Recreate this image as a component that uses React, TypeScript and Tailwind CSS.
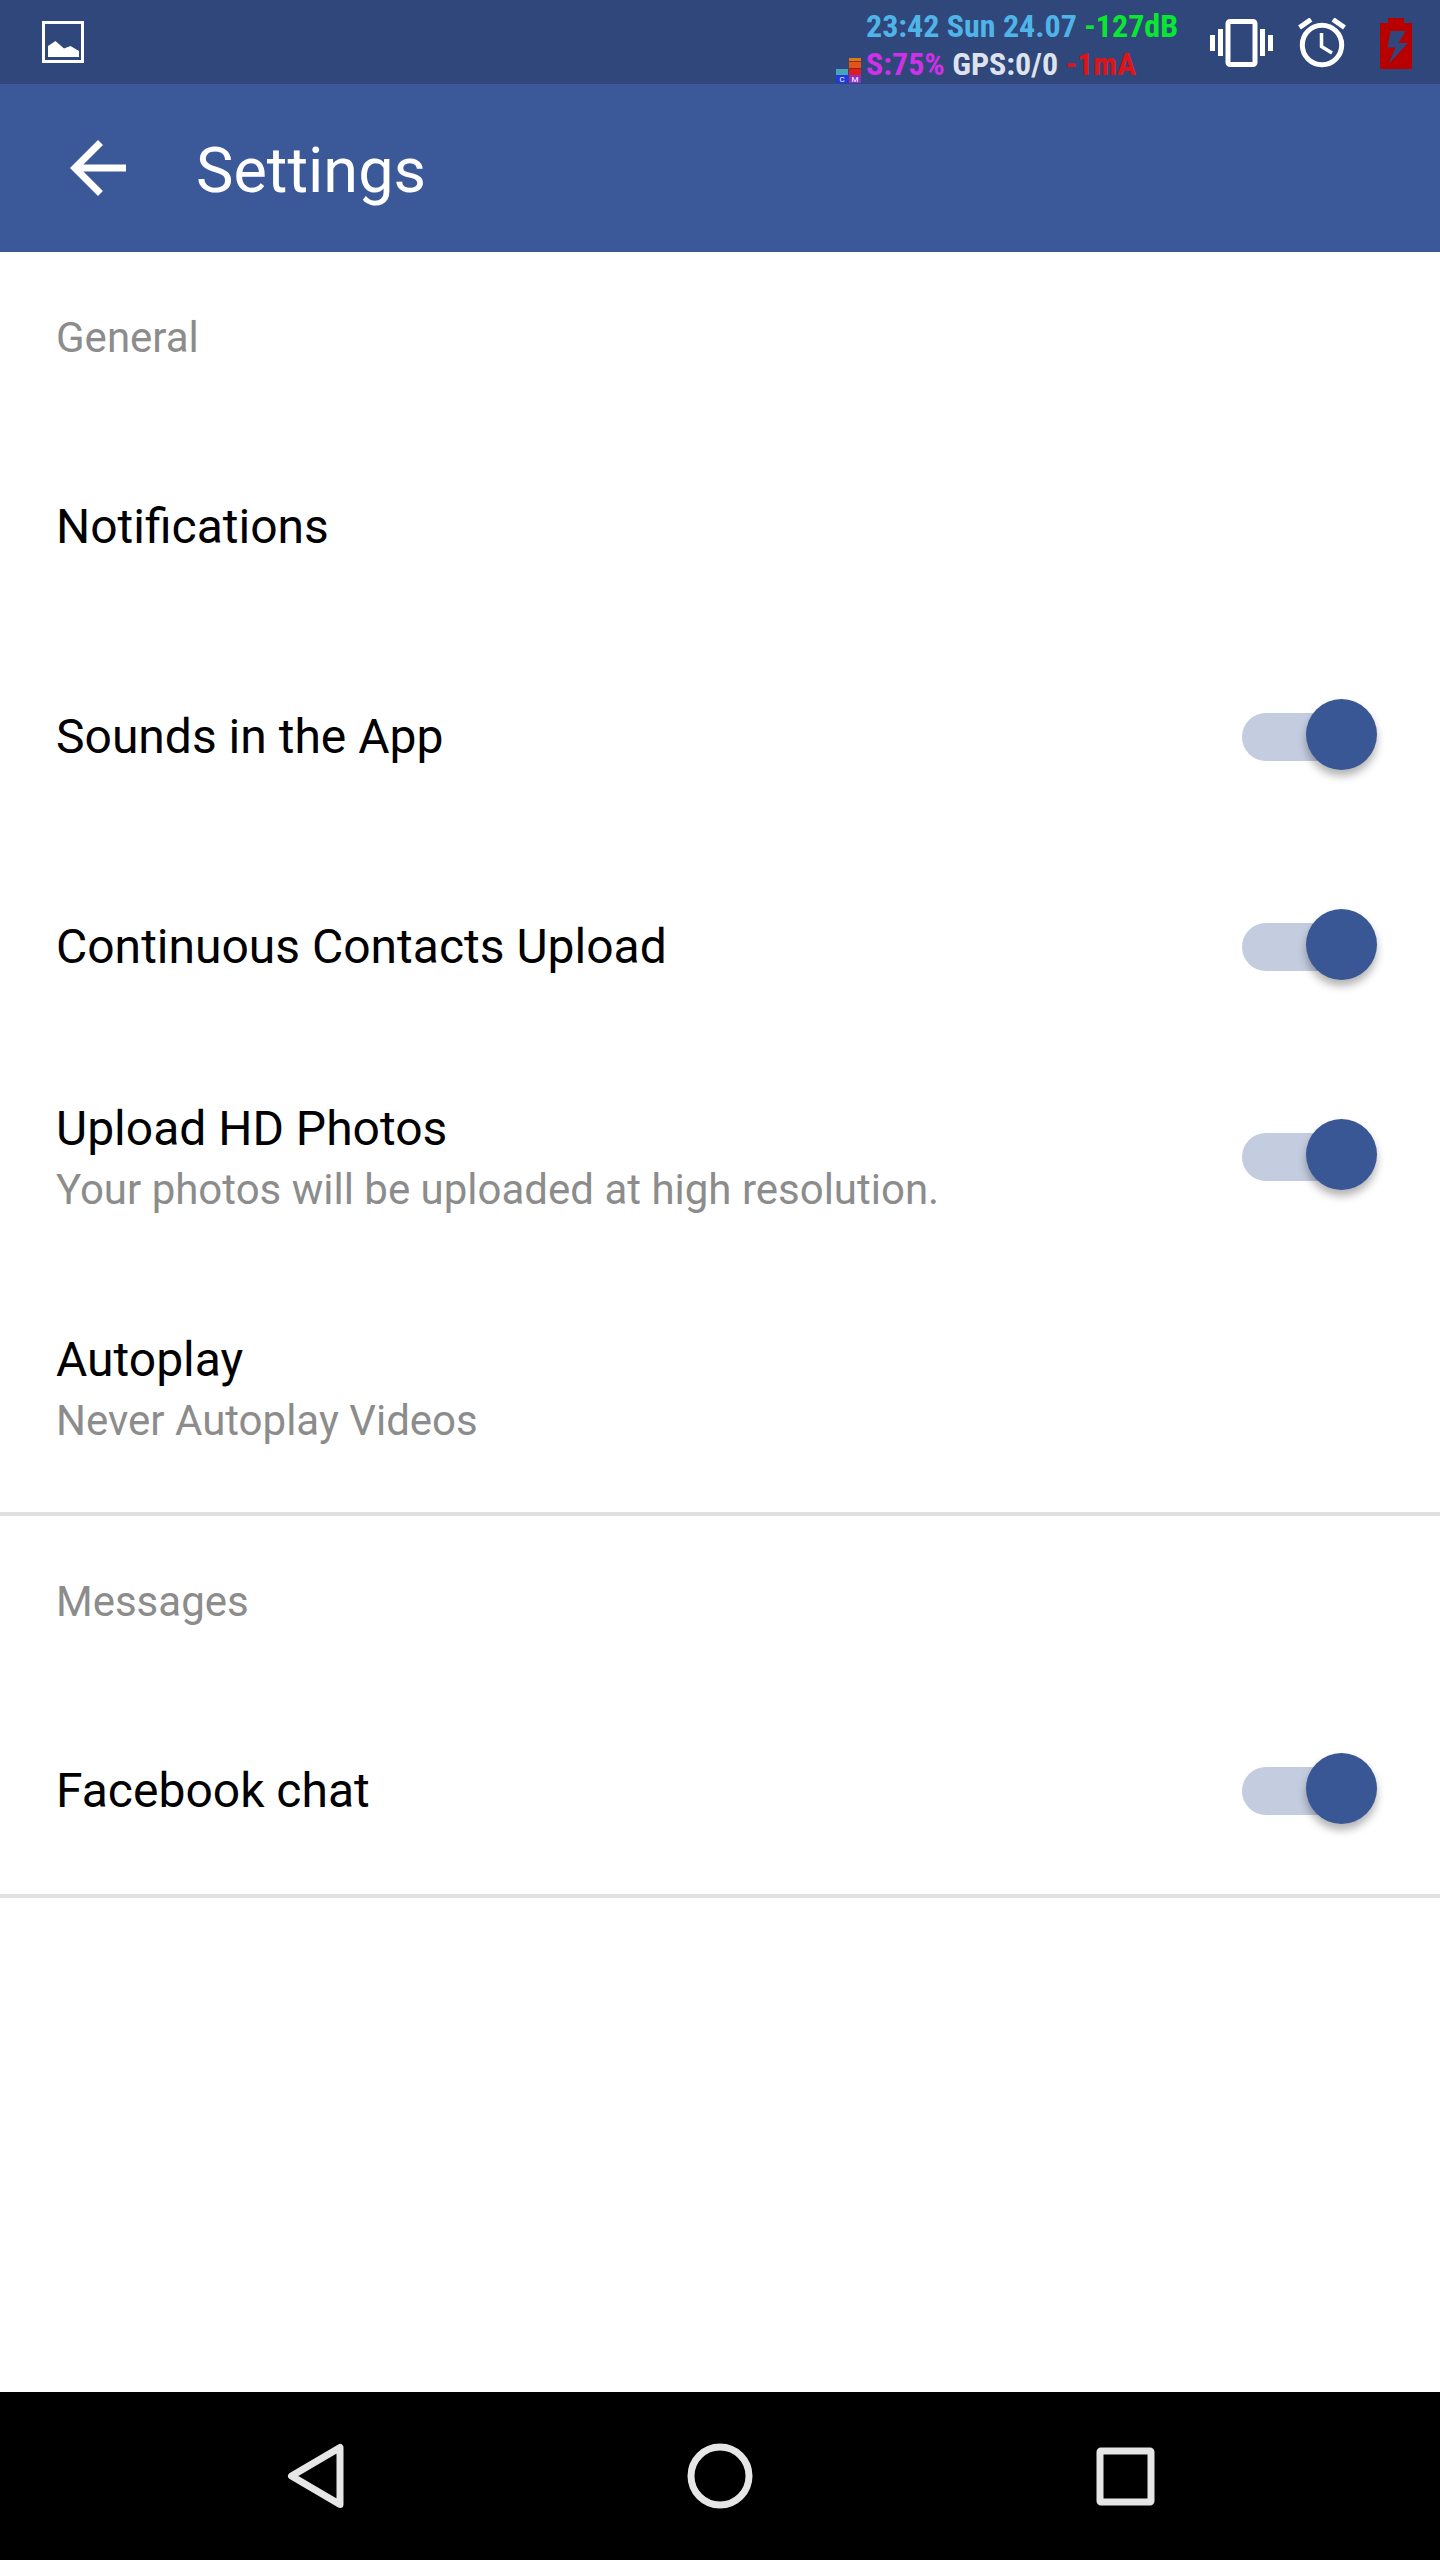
import React, { useState } from 'react';

interface ToggleProps {
  id: string;
  checked: boolean;
  onChange: (checked: boolean) => void;
}

const Toggle: React.FC<ToggleProps> = ({ id, checked, onChange }) => (
  <input
    id={id}
    type="checkbox"
    role="switch"
    checked={checked}
    onChange={(e) => onChange(e.target.checked)}
    className="
      relative mr-[14px] h-12 w-32 shrink-0 cursor-pointer appearance-none rounded-full bg-gray-300
      before:absolute before:-top-[14px] before:-left-2 before:h-[71px] before:w-[71px] before:rounded-full
      before:bg-gray-50 before:shadow-[0_6px_8px_rgba(0,0,0,0.3)] before:content-['']
      checked:bg-[#c4cce0] checked:before:left-16 checked:before:bg-[#3a5795]
    "
  />
);

interface SettingRowProps {
  id: string;
  title: string;
  subtitle?: string;
  tall?: boolean;
  toggle?: boolean;
}

const SettingRow: React.FC<SettingRowProps> = ({ id, title, subtitle, tall, toggle }) => {
  const [enabled, setEnabled] = useState(true);

  const text = (
    <span className="block min-w-0 flex-1">
      <span className="block text-[48px] leading-[66px] text-black">{title}</span>
      {subtitle && <span className="block text-[42px] leading-[56px] text-[#8c8c8c]">{subtitle}</span>}
    </span>
  );

  const rowClass = `flex w-full items-center px-14 pt-1 text-left ${tall ? 'min-h-[252px]' : 'min-h-[210px]'}`;

  if (toggle) {
    return (
      <label htmlFor={id} className={rowClass}>
        {text}
        <Toggle id={id} checked={enabled} onChange={setEnabled} />
      </label>
    );
  }

  return (
    <button type="button" id={id} className={rowClass}>
      {text}
    </button>
  );
};

const Section: React.FC<{ title: string; children: React.ReactNode }> = ({ title, children }) => (
  <section className="border-b-4 border-[#e0e0e0]">
    <h2 className="flex h-[168px] items-center px-14 pt-1 text-[42px] leading-[56px] text-[#8c8c8c]">{title}</h2>
    {children}
  </section>
);

const PictureIcon = () => (
  <svg width="42" height="42" viewBox="0 0 42 42" aria-hidden="true">
    <rect x="1.5" y="1.5" width="39" height="39" fill="none" stroke="#fff" strokeWidth="3" />
    <path d="M6 25l7.500-5 8.500 7.500 6.500-2.500 8.500 5v6H6z" fill="#fff" />
  </svg>
);

// Load bars with their C / M captions
const LoadMeter = () => (
  <svg width="25" height="25" viewBox="0 0 25 25" shapeRendering="crispEdges" aria-hidden="true">
    <rect x="0" y="11" width="12" height="6" fill="#45a5bd" />
    <rect x="0" y="17" width="12" height="8" fill="#2038e0" />
    <rect x="13" y="0" width="12" height="3" fill="#e07818" />
    <rect x="13" y="4" width="12" height="6" fill="#e0561a" />
    <rect x="13" y="11" width="12" height="6" fill="#e01c1c" />
    <rect x="13" y="3" width="12" height="1" fill="#8a3020" />
    <rect x="13" y="10" width="12" height="1" fill="#8a2020" />
    <rect x="13" y="17" width="12" height="8" fill="#8c30c8" />
    <text x="6" y="24" fontSize="8" textAnchor="middle" fill="#fff">C</text>
    <text x="19" y="24" fontSize="8" textAnchor="middle" fill="#fff">M</text>
  </svg>
);

const VibrateIcon = () => (
  <svg width="64" height="48" viewBox="0 0 64 48" fill="#fff" aria-hidden="true">
    <path d="M0 16h5v16H0zM8 10h5v27H8zM50 10h5v27h-5zM58 16h5v16h-5z" />
    <rect x="18" y="2.500" width="27" height="43" rx="2" fill="none" stroke="#fff" strokeWidth="5" />
  </svg>
);

const AlarmIcon = () => (
  <svg width="48" height="50" viewBox="0 0 48 50" fill="none" stroke="#fff" aria-hidden="true">
    <circle cx="24" cy="27" r="19.700" strokeWidth="5" />
    <path d="M1.500 9.500L13 1.500M46.500 9.500L35 1.500" strokeWidth="5" />
    <path d="M23.500 15v13.500l10.500 6.500" strokeWidth="3.500" />
  </svg>
);

const BatteryIcon = () => (
  <svg width="32" height="51" viewBox="0 0 32 51" aria-hidden="true">
    <path
      fillRule="evenodd"
      fill="#b80000"
      d="M8 0h16v5h8v46H0V5h8zM10.500 13L7.500 29.500h8L8.500 46L28 25H18.500L25.500 13z"
    />
  </svg>
);

const StatusBar = () => (
  <div className="flex h-[84px] items-center bg-[#2f477a]">
    <div className="flex-1 pl-[42px]">
      <PictureIcon />
    </div>
    <div className="flex items-end pt-[6px]">
      <div className="mr-1">
        <LoadMeter />
      </div>
      <div className="w-[345px] whitespace-pre pl-px font-['Roboto_Condensed','Liberation_Sans_Narrow',Roboto,sans-serif] text-[32px] leading-[38px] font-bold">
        <p>
          <span className="text-[#4fb4e8]">23:42 Sun 24.07</span> <span className="text-[#08e830]">-127dB</span>
        </p>
        <p>
          <span className="text-[#d030e8]">S:75%</span> <span className="text-[#dde2ec]">GPS:0/0</span>{' '}
          <span className="text-[#e01418]">-1mA</span>
        </p>
      </div>
    </div>
    <div className="flex items-center pt-[2px] pr-7">
      <VibrateIcon />
      <div className="ml-6">
        <AlarmIcon />
      </div>
      <div className="ml-[34px]">
        <BatteryIcon />
      </div>
    </div>
  </div>
);

const Toolbar = () => (
  <header className="flex h-[168px] items-center bg-[#3b5998] text-white">
    <button type="button" aria-label="Back" className="ml-[70px]">
      <svg width="56" height="56" viewBox="0 0 56 56" fill="#fff" aria-hidden="true">
        <path d="M56 24.500H13.400L33 4.900L28 0L0 28l28 28l4.900-4.900L13.400 31.500H56z" />
      </svg>
    </button>
    <h1 className="pt-[6px] pl-[70px] text-[63px] leading-[76px]">Settings</h1>
  </header>
);

const NavBar = () => (
  <nav className="grid h-[168px] grid-cols-3 bg-black px-28">
    <button type="button" aria-label="Back" className="flex items-center justify-center">
      <svg width="66" height="66" viewBox="0 0 66 66" aria-hidden="true">
        <path d="M58 4.500v57L9.500 33z" fill="none" stroke="#e6e6e6" strokeWidth="7" strokeLinejoin="round" />
      </svg>
    </button>
    <button type="button" aria-label="Home" className="flex items-center justify-center">
      <svg width="66" height="66" viewBox="0 0 66 66" aria-hidden="true">
        <circle cx="33" cy="33" r="29" fill="none" stroke="#e6e6e6" strokeWidth="7" />
      </svg>
    </button>
    <button type="button" aria-label="Recent apps" className="flex items-center justify-center">
      <svg width="66" height="66" viewBox="0 0 66 66" aria-hidden="true">
        <rect x="8" y="8" width="51" height="51" rx="1" fill="none" stroke="#e6e6e6" strokeWidth="7" />
      </svg>
    </button>
  </nav>
);

export default function App() {
  return (
    <div className="flex min-h-screen flex-col bg-white font-[Roboto,sans-serif]">
      <StatusBar />
      <Toolbar />
      <main className="flex-1">
        <Section title="General">
          <SettingRow id="notifications" title="Notifications" />
          <SettingRow id="sounds" title="Sounds in the App" toggle />
          <SettingRow id="contacts" title="Continuous Contacts Upload" toggle />
          <SettingRow
            id="hd-photos"
            title="Upload HD Photos"
            subtitle="Your photos will be uploaded at high resolution."
            toggle
          />
          <SettingRow id="autoplay" title="Autoplay" subtitle="Never Autoplay Videos" tall />
        </Section>
        <Section title="Messages">
          <SettingRow id="chat" title="Facebook chat" toggle />
        </Section>
      </main>
      <NavBar />
    </div>
  );
}
